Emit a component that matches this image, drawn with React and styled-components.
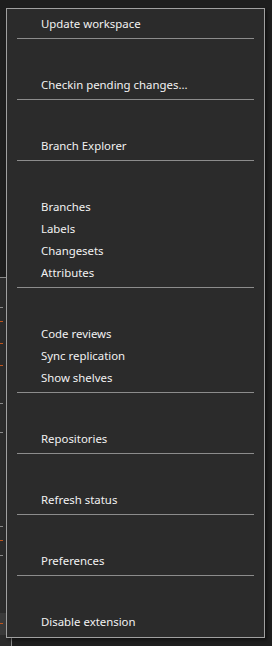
import React from 'react';
import styled, { createGlobalStyle } from 'styled-components';

const GlobalStyle = createGlobalStyle`
  html, body {
    margin: 0;
    padding: 0;
    background: #1e1e1e;
  }
  body {
    width: 272px;
    height: 646px;
    overflow: hidden;
    font-family: "Noto Sans", "Liberation Sans", sans-serif;
  }
`

const Page = styled.div`
  position: relative;
  width: 272px;
  height: 646px;
  display: flex;
  flex-direction: column;
`

const TopArea = styled.div`
  height: 277px;
  background: #1e1e1e;
`

const SidePanel = styled.div`
  flex: 1;
  display: flex;
`

const Strip = styled.div`
  width: 11px;
  background: #2b2b2b;
  border-top: 1px solid #8a8a8a;
  border-right: 1px solid #8a8a8a;
  position: relative;
`

const Rest = styled.div`
  flex: 1;
  background: #1e1e1e;
`

const Tick = styled.span`
  position: absolute;
  left: 0;
  width: 3px;
  height: 1px;
  background: ${p => (p.$orange ? '#c0541c' : '#8a8a8a')};
`

const Highlight = styled.span`
  position: absolute;
  left: 0;
  width: 6px;
  height: 22px;
  background: #3a3a3a;
`

const Menu = styled.div`
  position: absolute;
  left: 6px;
  top: 8px;
  width: 257px;
  background: #2b2b2b;
  border: 1px solid #a0a0a0;
  padding: 3px 0 5px;
  box-shadow: 2px 2px 3px rgba(0, 0, 0, 0.45);
  display: flex;
  flex-direction: column;
`

const Item = styled.div`
  height: 22px;
  line-height: 24px;
  padding-left: 34px;
  color: #f2f2f2;
  font-size: 11.4px;
  white-space: nowrap;
  overflow: hidden;
`

const Separator = styled.div`
  height: 1px;
  margin: 4px 10px 34px;
  background: #8c8c8c;
`

const groups = [
  ['Update workspace'],
  ['Checkin pending changes...'],
  ['Branch Explorer'],
  ['Branches', 'Labels', 'Changesets', 'Attributes'],
  ['Code reviews', 'Sync replication', 'Show shelves'],
  ['Repositories'],
  ['Refresh status'],
  ['Preferences'],
  ['Disable extension'],
]

// offsets from top of the side strip (starts at y=278)
const ticks = [
  { y: 29 }, { y: 43, orange: true }, { y: 65, orange: true }, { y: 87, orange: true },
  { y: 125 }, { y: 154 }, { y: 248 }, { y: 262, orange: true }, { y: 277 },
  { y: 345, orange: true },
]

export default function App() {
  return (
    <>
      <GlobalStyle />
      <Page>
        <TopArea />
        <SidePanel>
          <Strip>
            <Highlight style={{ top: 335 }} />
            {ticks.map((t, i) => (
              <Tick key={i} $orange={t.orange} style={{ top: t.y }} />
            ))}
          </Strip>
          <Rest />
        </SidePanel>
        <Menu>
          {groups.map((g, i) => (
            <React.Fragment key={i}>
              {g.map(label => <Item key={label}>{label}</Item>)}
              {i < groups.length - 1 && <Separator />}
            </React.Fragment>
          ))}
        </Menu>
      </Page>
    </>
  )
}
